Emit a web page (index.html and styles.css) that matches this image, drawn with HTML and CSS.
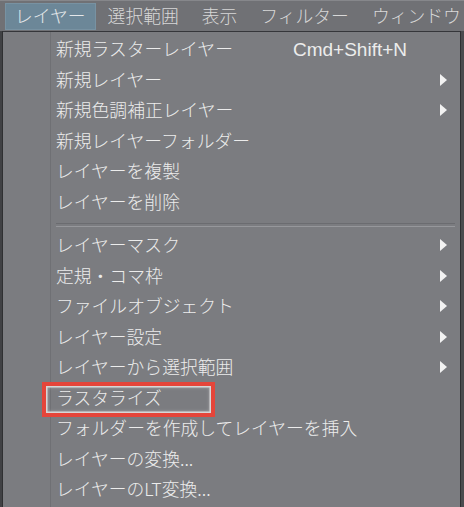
FILE: index.html
```html
<!DOCTYPE html>
<html lang="ja">
<head>
<meta charset="utf-8">
<link rel="stylesheet" href="styles.css">
</head>
<body>
<div class="screen">
  <nav class="menubar">
    <span class="mb-item active">レイヤー</span>
    <span class="mb-item">選択範囲</span>
    <span class="mb-item">表示</span>
    <span class="mb-item">フィルター</span>
    <span class="mb-item">ウィンドウ</span>
  </nav>
  <div class="body-row">
    <div class="side-left"></div>
    <div class="menu">
      <div class="item"><span class="label">新規ラスターレイヤー</span><span class="shortcut">Cmd+Shift+N</span><span class="arrow-slot"></span></div>
      <div class="item"><span class="label">新規レイヤー</span><span class="arrow-slot"><i class="arrow"></i></span></div>
      <div class="item"><span class="label">新規色調補正レイヤー</span><span class="arrow-slot"><i class="arrow"></i></span></div>
      <div class="item"><span class="label">新規レイヤーフォルダー</span><span class="arrow-slot"></span></div>
      <div class="item"><span class="label">レイヤーを複製</span><span class="arrow-slot"></span></div>
      <div class="item"><span class="label">レイヤーを削除</span><span class="arrow-slot"></span></div>
      <div class="separator"></div>
      <div class="item"><span class="label">レイヤーマスク</span><span class="arrow-slot"><i class="arrow"></i></span></div>
      <div class="item"><span class="label">定規・コマ枠</span><span class="arrow-slot"><i class="arrow"></i></span></div>
      <div class="item"><span class="label">ファイルオブジェクト</span><span class="arrow-slot"><i class="arrow"></i></span></div>
      <div class="item"><span class="label">レイヤー設定</span><span class="arrow-slot"><i class="arrow"></i></span></div>
      <div class="item"><span class="label">レイヤーから選択範囲</span><span class="arrow-slot"><i class="arrow"></i></span></div>
      <div class="item marked"><span class="label">ラスタライズ</span><span class="arrow-slot"></span><span class="highlight-box"></span></div>
      <div class="item"><span class="label">フォルダーを作成してレイヤーを挿入</span><span class="arrow-slot"></span></div>
      <div class="item"><span class="label">レイヤーの変換...</span><span class="arrow-slot"></span></div>
      <div class="item"><span class="label">レイヤーのLT変換...</span><span class="arrow-slot"></span></div>
    </div>
    <div class="side-right"></div>
  </div>
</div>
</body>
</html>
```

FILE: styles.css
```css
* { box-sizing: border-box; }
html, body {
  margin: 0;
  padding: 0;
  width: 464px;
  height: 507px;
  overflow: hidden;
  background: #4e4f52;
  font-family: "Noto Sans CJK JP", "Noto Sans", sans-serif;
}
.screen {
  width: 464px;
  height: 507px;
  display: flex;
  flex-direction: column;
}
.menubar {
  height: 31px;
  flex: none;
  display: flex;
  align-items: center;
  gap: 2px;
  padding-left: 5px;
  background: #707175;
  border-top: 1px solid #86878b;
}
.mb-item {
  height: 27px;
  display: flex;
  align-items: center;
  padding: 0 10px 1px;
  font-size: 17.8px;
  font-weight: 300;
  color: #d8d8d8;
  line-height: 1;
  white-space: nowrap;
}
.mb-item + .mb-item {
  padding-right: 11px;
}
.mb-item.active {
  background: #6c8798;
  box-shadow: inset 0 0 0 1px #7892a2;
  color: #e4e7ea;
}
.body-row {
  flex: 1;
  display: flex;
  min-height: 0;
}
.side-left {
  width: 3px;
  flex: none;
  background: #404144;
  border-right: 1px solid #2f3032;
}
.side-right {
  flex: 1;
  background: #4a4b4e;
  border-left: 1px solid #2f3032;
}
.menu {
  width: 457px;
  flex: none;
  background:
    linear-gradient(to right, transparent 47px, #6f7074 47px, #6f7074 48px, transparent 48px),
    #7b7c80;
  border-top: 1px solid #35363a;
  padding-top: 2px;
}
.item {
  position: relative;
  height: 30.5px;
  display: flex;
  align-items: center;
  padding-left: 53px;
  padding-right: 12px;
  color: #ececec;
  font-size: 17.8px;
  font-weight: 300;
  line-height: 1;
  white-space: nowrap;
}
.label {
  flex: 1;
}
.shortcut {
  font-family: "Liberation Sans", Arial, sans-serif;
  font-size: 19px;
  font-weight: 400;
  color: #ececec;
  margin-right: 33px;
}
.arrow-slot {
  width: 8px;
  height: 12px;
  display: flex;
  align-items: center;
}
.arrow {
  display: block;
  width: 0;
  height: 0;
  border-top: 6px solid transparent;
  border-bottom: 6px solid transparent;
  border-left: 7px solid #f2f2f2;
}
.separator {
  height: 13px;
  padding-top: 6px;
  margin-left: 53px;
  margin-right: 5px;
}
.separator::before {
  content: "";
  display: block;
  height: 2px;
  border-top: 1px solid #6b6c70;
  border-bottom: 1px solid #96979b;
}
.highlight-box {
  position: absolute;
  left: 39px;
  top: -1px;
  width: 173px;
  height: 35px;
  border: 4px solid #e5453a;
  box-shadow: inset 0 0 0 1.5px #d6d6d6, inset 0 0 3px 2px rgba(220, 220, 220, 0.35);
  pointer-events: none;
}
```
